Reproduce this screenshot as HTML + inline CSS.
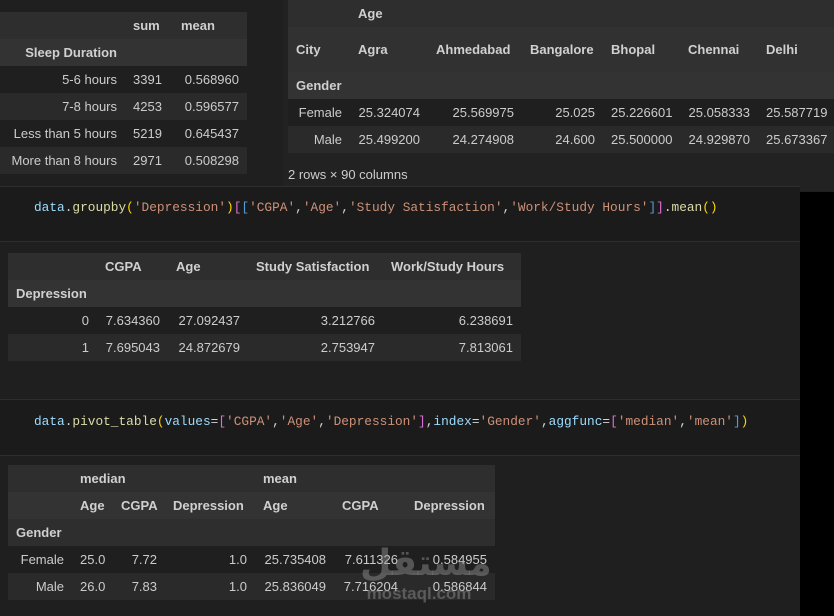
<!DOCTYPE html>
<html><head><meta charset="utf-8"><style>
*{margin:0;padding:0;box-sizing:border-box}
body{width:834px;height:616px;background:#1f1f1f;position:relative;overflow:hidden;font-family:"Liberation Sans",sans-serif;font-size:13px;color:#cccccc}
table{position:absolute;border-collapse:collapse;table-layout:fixed}
td,th{height:27px;padding:0 8px;white-space:nowrap}
th{font-weight:bold;text-align:left;color:#d0d0d0}
td{text-align:right}
tr.h1{background:#2e2e2e}
tr.h2{background:#333333}
tr.d0{background:#1f1f1f}
tr.d1{background:#2a2a2a}
th.r{text-align:right}
.code{position:absolute;left:0;width:800px;background:#1b1b1b;border-top:1px solid #2e2e2e;border-bottom:1px solid #2e2e2e}
.code pre{position:absolute;left:34px;font-family:"Liberation Mono",monospace;font-size:12.8px;color:#d4d4d4}
.v{color:#9cdcfe}.f{color:#dcdcaa}.s{color:#ce9178}.p{color:#ffd700}.b{color:#da70d6}.c{color:#569cd6}
</style></head><body>

<table style="left:0;top:12px;width:247px">
<colgroup><col style="width:125px"><col style="width:48px"><col style="width:74px"></colgroup>
<tr class="h1"><th></th><th>sum</th><th>mean</th></tr>
<tr class="h2"><th class="r">Sleep Duration</th><th></th><th></th></tr>
<tr class="d0"><td>5-6 hours</td><td style="text-align:left">3391</td><td>0.568960</td></tr>
<tr class="d1"><td>7-8 hours</td><td style="text-align:left">4253</td><td>0.596577</td></tr>
<tr class="d0"><td>Less than 5 hours</td><td style="text-align:left">5219</td><td>0.645437</td></tr>
<tr class="d1"><td>More than 8 hours</td><td style="text-align:left">2971</td><td>0.508298</td></tr>
</table>

<div style="position:absolute;left:283px;top:0;width:551px;height:191px;background:#222"></div>
<table style="left:288px;top:0;width:546px">
<colgroup><col style="width:62px"><col style="width:78px"><col style="width:94px"><col style="width:81px"><col style="width:77px"><col style="width:78px"><col style="width:76px"></colgroup>
<tr class="h1"><th></th><th>Age</th><th></th><th></th><th></th><th></th><th></th></tr>
<tr class="h1" style="background:#313131"><th style="height:45px">City</th><th>Agra</th><th>Ahmedabad</th><th>Bangalore</th><th>Bhopal</th><th>Chennai</th><th>Delhi</th></tr>
<tr class="h2"><th style="height:26px">Gender</th><th></th><th></th><th></th><th></th><th></th><th></th></tr>
<tr class="d0"><td>Female</td><td>25.324074</td><td>25.569975</td><td>25.025</td><td>25.226601</td><td>25.058333</td><td>25.587719</td></tr>
<tr class="d1"><td style="height:26px">Male</td><td>25.499200</td><td>24.274908</td><td>24.600</td><td>25.500000</td><td>24.929870</td><td>25.673367</td></tr>
</table>
<div style="position:absolute;left:288px;top:167px;font-size:13px;color:#ccc">2 rows × 90 columns</div>

<div style="position:absolute;left:800px;top:192px;width:34px;height:424px;background:#000"></div>

<div class="code" style="top:186px;height:56px"><pre style="top:13px"><span class="v">data</span>.<span class="f">groupby</span><span class="p">(</span><span class="s">'Depression'</span><span class="p">)</span><span class="b">[</span><span class="c">[</span><span class="s">'CGPA'</span>,<span class="s">'Age'</span>,<span class="s">'Study Satisfaction'</span>,<span class="s">'Work/Study Hours'</span><span class="c">]</span><span class="b">]</span>.<span class="f">mean</span><span class="p">()</span></pre></div>

<table style="left:8px;top:253px;width:513px">
<colgroup><col style="width:89px"><col style="width:71px"><col style="width:80px"><col style="width:135px"><col style="width:138px"></colgroup>
<tr class="h1"><th></th><th>CGPA</th><th>Age</th><th>Study Satisfaction</th><th>Work/Study Hours</th></tr>
<tr class="h2"><th>Depression</th><th></th><th></th><th></th><th></th></tr>
<tr class="d0"><td>0</td><td>7.634360</td><td>27.092437</td><td>3.212766</td><td>6.238691</td></tr>
<tr class="d1"><td>1</td><td>7.695043</td><td>24.872679</td><td>2.753947</td><td>7.813061</td></tr>
</table>

<div class="code" style="top:399px;height:57px"><pre style="top:14px"><span class="v">data</span>.<span class="f">pivot_table</span><span class="p">(</span><span class="v">values</span>=<span class="b">[</span><span class="s">'CGPA'</span>,<span class="s">'Age'</span>,<span class="s">'Depression'</span><span class="b">]</span>,<span class="v">index</span>=<span class="s">'Gender'</span>,<span class="v">aggfunc</span>=<span class="b">[</span><span class="s">'median'</span>,<span class="s">'mean'</span><span class="c">]</span><span class="p">)</span></pre></div>

<table style="left:8px;top:465px;width:487px">
<colgroup><col style="width:64px"><col style="width:41px"><col style="width:52px"><col style="width:90px"><col style="width:79px"><col style="width:72px"><col style="width:89px"></colgroup>
<tr class="h1"><th></th><th style="overflow:visible">median</th><th></th><th></th><th>mean</th><th></th><th></th></tr>
<tr class="h2"><th></th><th>Age</th><th>CGPA</th><th>Depression</th><th>Age</th><th>CGPA</th><th>Depression</th></tr>
<tr class="h2" style="background:#2e2e2e"><th>Gender</th><th></th><th></th><th></th><th></th><th></th><th></th></tr>
<tr class="d0"><td>Female</td><td>25.0</td><td>7.72</td><td>1.0</td><td>25.735408</td><td>7.611326</td><td>0.584955</td></tr>
<tr class="d1"><td>Male</td><td>26.0</td><td>7.83</td><td>1.0</td><td>25.836049</td><td>7.716204</td><td>0.586844</td></tr>
</table>

<div style="position:absolute;left:360px;top:544px;width:118px;text-align:center;color:rgba(150,150,150,0.45);font-family:'DejaVu Sans',sans-serif;font-weight:bold;font-size:36px;line-height:40px">مستقل</div>
<div style="position:absolute;left:364px;top:584px;width:110px;text-align:center;color:rgba(150,150,150,0.45);font-size:17px;font-weight:bold">mostaql.com</div>
</body></html>
